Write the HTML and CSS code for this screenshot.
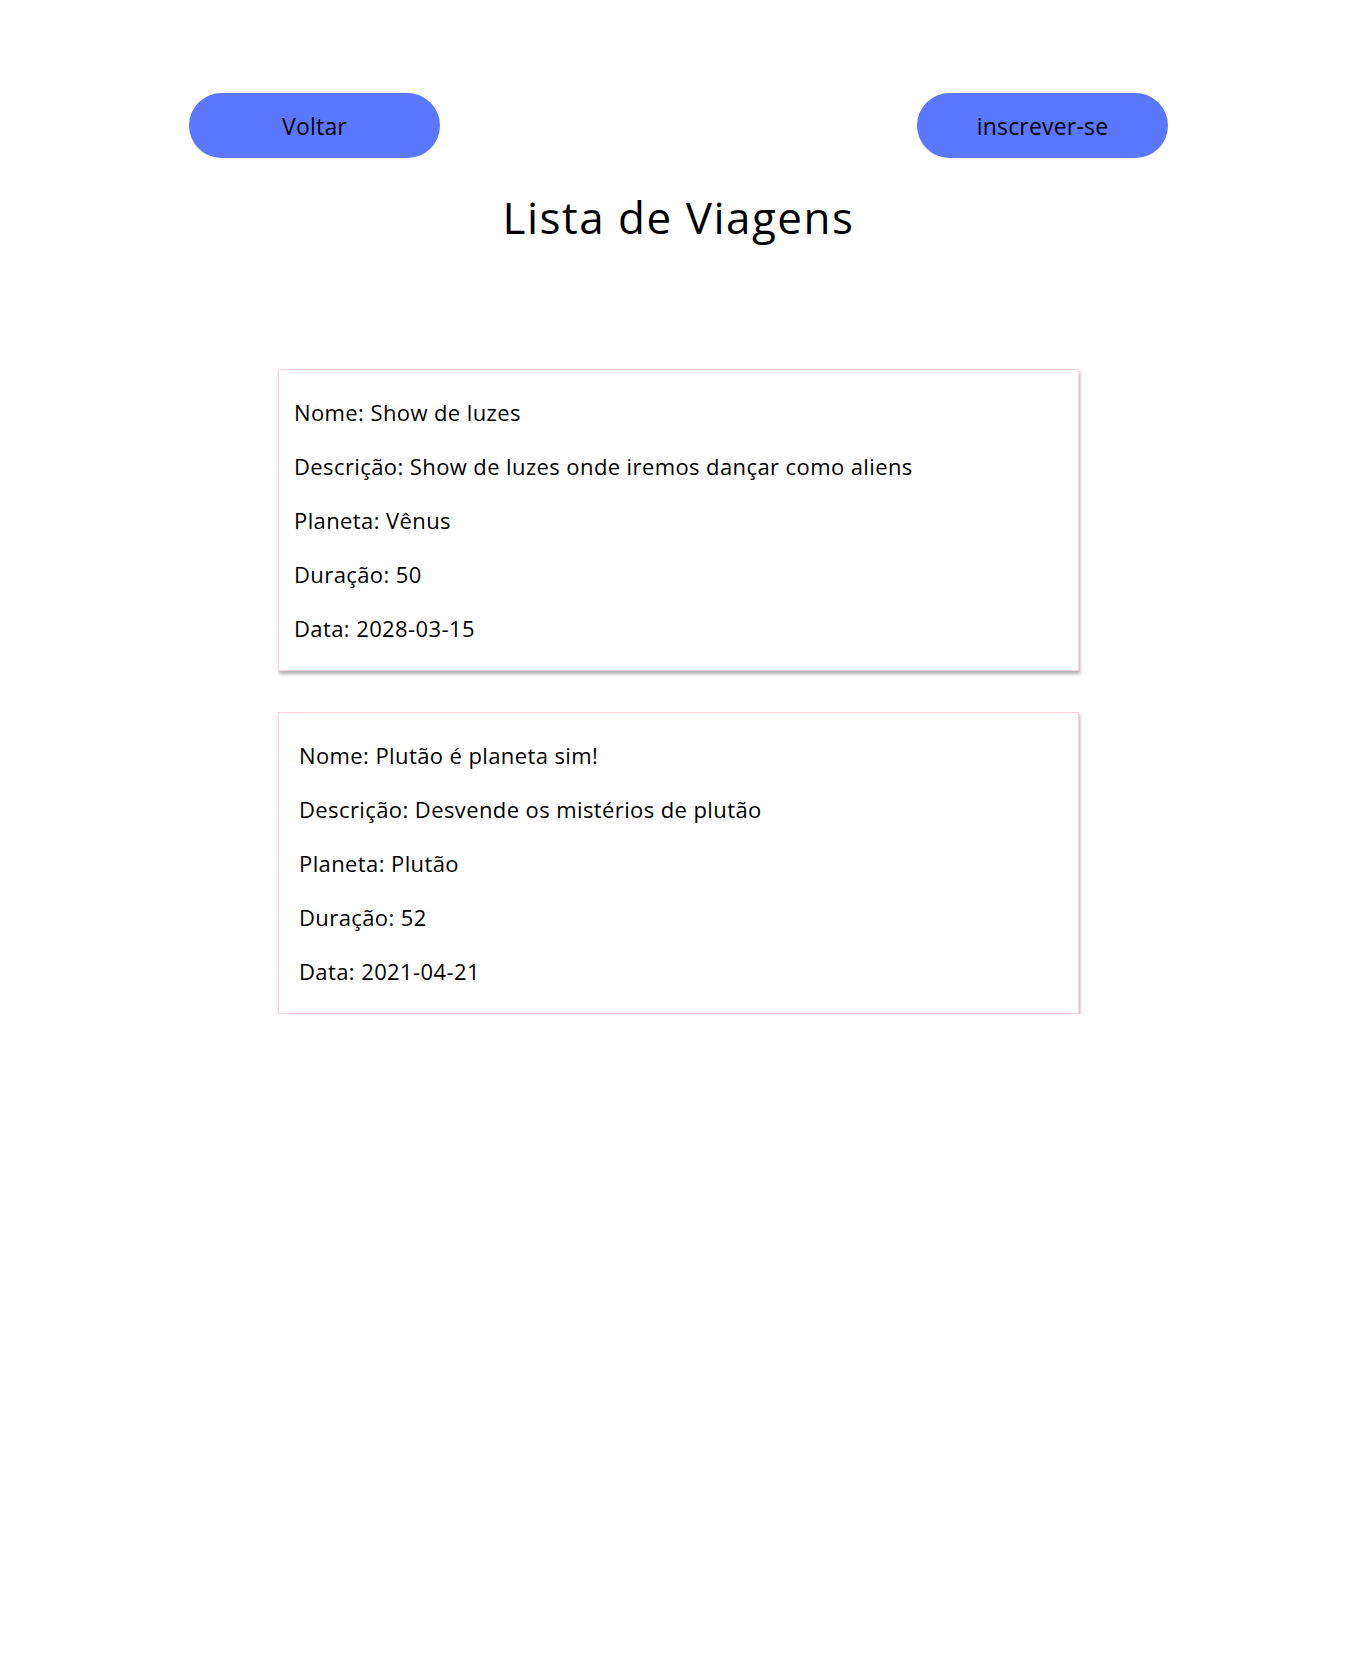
FILE: index.html
```html
<!DOCTYPE html>
<html lang="pt">
<head>
<meta charset="utf-8">
<title>Lista de Viagens</title>
<link rel="stylesheet" href="styles.css">
</head>
<body>
<div class="page">
  <header class="top">
    <button class="btn">Voltar</button>
    <button class="btn">inscrever-se</button>
  </header>
  <h1 class="title">Lista de Viagens</h1>
  <main class="list">
    <section class="card">
      <p>Nome: Show de luzes</p>
      <p>Descrição: Show de luzes onde iremos dançar como aliens</p>
      <p>Planeta: Vênus</p>
      <p>Duração: 50</p>
      <p>Data: 2028-03-15</p>
    </section>
    <section class="card card-wide">
      <p>Nome: Plutão é planeta sim!</p>
      <p>Descrição: Desvende os mistérios de plutão</p>
      <p>Planeta: Plutão</p>
      <p>Duração: 52</p>
      <p>Data: 2021-04-21</p>
    </section>
  </main>
</div>
</body>
</html>
```

FILE: styles.css
```css
* { box-sizing: border-box; }
html, body { margin: 0; padding: 0; background: #fff; }
body {
  font-family: "Open Sans", "Noto Sans", sans-serif;
  color: #000;
}
.page {
  padding: 93px 198px 0 189px;
}
.top {
  display: flex;
  justify-content: space-between;
}
.btn {
  width: 251px;
  height: 65px;
  border: none;
  border-radius: 33px;
  background: #5b77ff;
  color: #000;
  font-family: "Open Sans", "Noto Sans", sans-serif;
  font-size: 23px;
  letter-spacing: 0.2px;
  display: flex;
  align-items: center;
  justify-content: center;
  padding: 0;
}
.title {
  margin: 29px 0 0;
  text-align: center;
  font-size: 44px;
  font-weight: 400;
  line-height: 60px;
  letter-spacing: 1.5px;
}
.list {
  margin-top: 122px;
  display: flex;
  flex-direction: column;
  align-items: center;
  gap: 41px;
}
.card {
  width: 801px;
  border: 1px solid #ffd3d3;
  box-shadow: 1px 3px 3px rgba(0, 0, 0, 0.3);
  padding: 4px 15px 4px 15px;
  background: #fff;
}
.card-wide { padding-left: 20px; }
.card p {
  margin: 22px 0;
  font-size: 22px;
  line-height: 32px;
  letter-spacing: 0.4px;
}
```
